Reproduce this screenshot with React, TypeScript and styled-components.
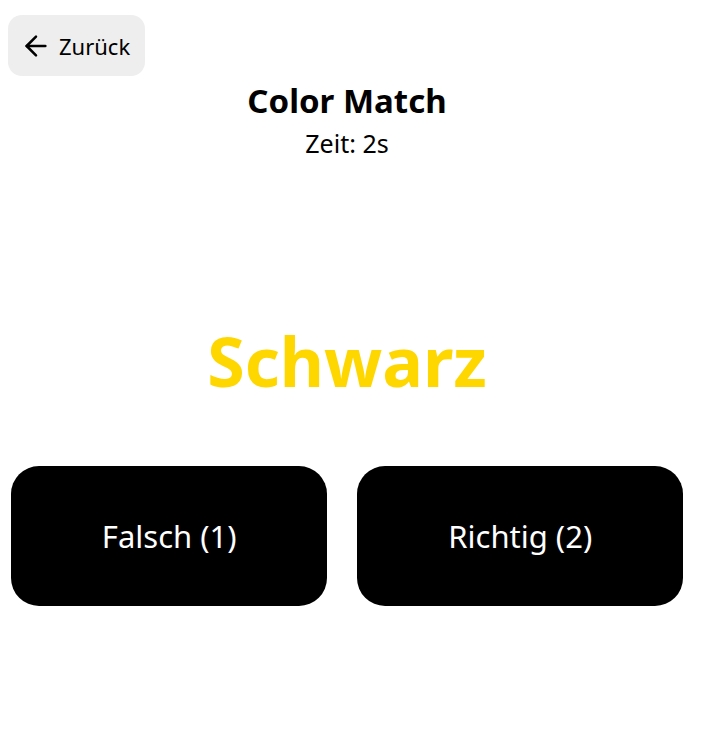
import React from "react";
import styled, { createGlobalStyle } from "styled-components";
import { ArrowLeft } from "lucide-react";

const GlobalStyle = createGlobalStyle`
  body {
    margin: 0;
    background: #ffffff;
    font-family: "Segoe UI", "Noto Sans", "Open Sans", sans-serif;
    color: #000000;
  }
`;

const Page = styled.div`
  display: flex;
  flex-direction: column;
  width: 694px;
  padding-top: 15px;
`;

const BackButton = styled.button`
  align-self: flex-start;
  display: flex;
  align-items: center;
  gap: 7px;
  height: 61px;
  margin-left: 8px;
  padding: 0 15px 0 12px;
  border: none;
  border-radius: 14px;
  background: #eeeeee;
  font-family: inherit;
  font-size: 22px;
  color: #000000;
  cursor: pointer;
`;

const Header = styled.div`
  display: flex;
  flex-direction: column;
  align-items: center;
  margin-top: 4px;
`;

const Title = styled.h1`
  margin: 0;
  font-size: 33px;
  font-weight: 700;
  line-height: 42px;
`;

const Timer = styled.div`
  margin-top: 4px;
  font-size: 25px;
  line-height: 34px;
`;

const Word = styled.div<{ $color: string }>`
  margin-top: 151px;
  text-align: center;
  font-size: 68px;
  font-weight: 700;
  line-height: 100px;
  color: ${(p) => p.$color};
`;

const Answers = styled.div`
  display: flex;
  gap: 30px;
  margin: 55px 11px 0;
`;

const AnswerButton = styled.button`
  flex: 1 1 auto;
  height: 140px;
  border: none;
  border-radius: 28px;
  background: #000000;
  color: #ffffff;
  font-family: inherit;
  font-size: 31px;
  cursor: pointer;
`;

export default function App() {
  return (
    <>
      <GlobalStyle />
      <Page>
        <BackButton>
          <ArrowLeft size={32} strokeWidth={1.9} />
          Zurück
        </BackButton>
        <Header>
          <Title>Color Match</Title>
          <Timer>Zeit: 2s</Timer>
        </Header>
        <Word $color="#FFD700">Schwarz</Word>
        <Answers>
          <AnswerButton>Falsch (1)</AnswerButton>
          <AnswerButton>Richtig (2)</AnswerButton>
        </Answers>
      </Page>
    </>
  );
}
